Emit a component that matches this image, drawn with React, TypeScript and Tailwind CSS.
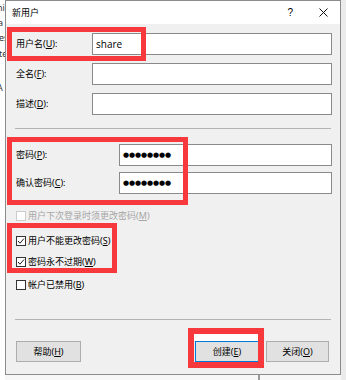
import type { ReactNode } from 'react'

const font = "font-['Noto_Sans','Noto_Sans_CJK_SC',sans-serif]"

function Field({ label, labelW, top, children }: { label: ReactNode; labelW: string; top: string; children?: ReactNode }) {
  return (
    <div className={`flex items-center h-[22px] ${top}`}>
      <div className={`${labelW} shrink-0 text-[9px] text-black`}>{label}</div>
      <div className="flex-1 h-[22px] border border-[#8a8a8a] bg-white flex items-center pl-[3px]">{children}</div>
    </div>
  )
}

function Dots() {
  return (
    <div className="flex items-center">
      {Array.from({ length: 8 }).map((_, i) => (
        <span key={i} className="w-[6px] text-center text-[7px] leading-none font-['DejaVu_Sans',sans-serif] text-black">●</span>
      ))}
    </div>
  )
}

function Check({ label, checked, disabled, top }: { label: ReactNode; checked?: boolean; disabled?: boolean; top: string }) {
  return (
    <div className={`flex items-center h-[14px] ${top}`}>
      <div
        className={`w-[10px] h-[10px] shrink-0 border bg-white flex items-center justify-center ${
          disabled ? 'border-[#cccccc]' : 'border-[#333333]'
        }`}
      >
        {checked && (
          <svg width="8" height="8" viewBox="0 0 8 8">
            <polyline points="1,4 3,6.2 7,1.5" fill="none" stroke="#222" strokeWidth="1" />
          </svg>
        )}
      </div>
      <span className={`ml-[2px] text-[9px] ${disabled ? 'text-[#a6a6a6]' : 'text-black'}`}>{label}</span>
    </div>
  )
}

function Btn({ children, w, primary }: { children: ReactNode; w: string; primary?: boolean }) {
  return (
    <div
      className={`${w} h-[21px] flex items-center justify-center text-[9px] text-black bg-[#e1e1e1] border ${
        primary ? 'border-[#0078d7]' : 'border-[#adadad]'
      }`}
    >
      {children}
    </div>
  )
}

export default function App() {
  return (
    <div className={`relative w-[346px] h-[380px] overflow-hidden bg-white flex ${font}`}>
      {/* background window peeking out on the left */}
      <div className="w-[5px] shrink-0 overflow-hidden text-[9px] leading-none text-[#333] flex flex-col">
        <span className="mt-[3px] ml-[-3px]">ni</span>
        <span className="mt-[6px] ml-[-2px]">a</span>
        <span className="mt-[6px] ml-[-1px]">es</span>
        <span className="mt-[7px] ml-[-1px]">te</span>
        <span className="mt-[25px] ml-[-3px]">A</span>
      </div>

      <div className="w-[336px] shrink-0 flex flex-col">
        <div className="h-[375px] border border-[#8c8c8c] bg-[#f0f0f0] flex flex-col">
          {/* title bar */}
          <div className="h-[23px] bg-white flex items-center pl-[6px] pr-[12px]">
            <span className="text-[9px] text-black">新用户</span>
            <span className="ml-auto text-[10px] text-black font-['Liberation_Sans',sans-serif]">?</span>
            <svg className="ml-[26px]" width="9" height="9" viewBox="0 0 9 9">
              <path d="M0.5 0.5 L8.5 8.5 M8.5 0.5 L0.5 8.5" stroke="#111" strokeWidth="1" />
            </svg>
          </div>

          <div className="flex flex-col pl-[10px] pr-[8px]">
            <Field label={<>用户名(<u>U</u>):</>} labelW="w-[76px]" top="mt-[9px]">
              <span className="text-[10px] text-black font-['Open_Sans',sans-serif]">share</span>
            </Field>
            <Field label={<>全名(<u>F</u>):</>} labelW="w-[76px]" top="mt-[8px]" />
            <Field label={<>描述(<u>D</u>):</>} labelW="w-[76px]" top="mt-[8px]" />

            <div className="mt-[13px] mr-[1px] ml-[-1px] border-t border-[#b4b4b4]" />

            <Field label={<>密码(<u>P</u>):</>} labelW="w-[103px]" top="mt-[15px]">
              <Dots />
            </Field>
            <Field label={<>确认密码(<u>C</u>):</>} labelW="w-[103px]" top="mt-[6px]">
              <Dots />
            </Field>

            <Check label={<>用户下次登录时须更改密码(<u>M</u>)</>} disabled top="mt-[15px]" />
            <Check label={<>用户不能更改密码(<u>S</u>)</>} checked top="mt-[11px]" />
            <Check label={<>密码永不过期(<u>W</u>)</>} checked top="mt-[7px]" />
            <Check label={<>帐户已禁用(<u>B</u>)</>} top="mt-[9px]" />

            <div className="mt-[27px] mr-[1px] ml-[-1px] border-t border-[#b4b4b4]" />

            <div className="mt-[21px] flex items-center pr-[3px]">
              <Btn w="w-[65px]">帮助(<u>H</u>)</Btn>
              <div className="ml-auto" />
              <Btn w="w-[64px]" primary>创建(<u>E</u>)</Btn>
              <div className="w-[7px]" />
              <Btn w="w-[63px]">关闭(<u>O</u>)</Btn>
            </div>
          </div>
        </div>
        {/* strip below the dialog */}
        <div className="flex-1 flex bg-[#f7f7f7]">
          <div className="w-[253px]" />
          <div className="w-[2px] bg-[#9a9a9a]" />
        </div>
      </div>

      <div className="flex-1 bg-[#ebebeb]" />

      {/* red annotation boxes */}
      <div className="absolute left-[7px] top-[27px] w-[139px] h-[34px] border-[5px] border-[#f7393d]" />
      <div className="absolute left-[7px] top-[137px] w-[181px] h-[68px] border-[5px] border-[#f7393d]" />
      <div className="absolute left-[7px] top-[223px] w-[110px] h-[50px] border-[5px] border-[#f7393d]" />
      <div className="absolute left-[188px] top-[328px] w-[76px] h-[40px] border-[6px] border-[#f7393d]">
        <div className="h-[7px] bg-white" />
      </div>
    </div>
  )
}
